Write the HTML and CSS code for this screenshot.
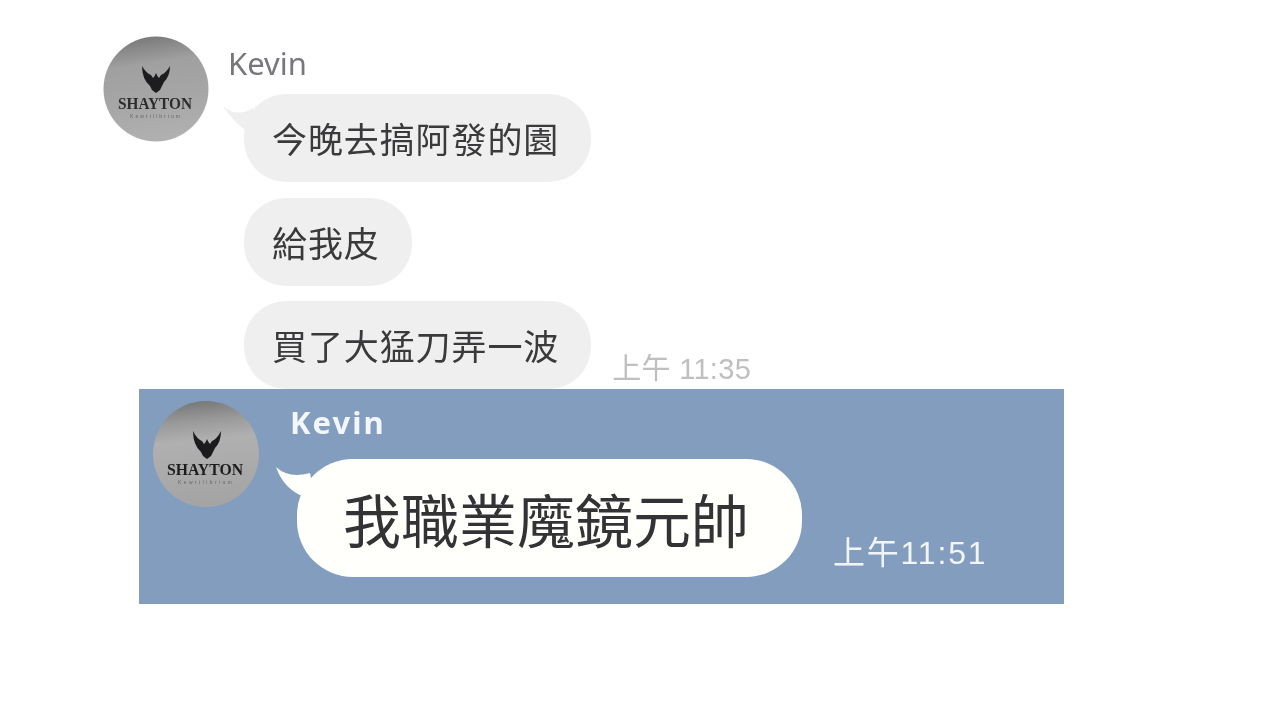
FILE: index.html
```html
<!DOCTYPE html>
<html lang="zh-Hant">
<head>
<meta charset="utf-8">
<title>Kevin</title>
<link rel="stylesheet" href="styles.css">
</head>
<body>
<section class="light">
  <svg class="avatar" viewBox="0 0 106 106" aria-hidden="true">
    <defs>
      <linearGradient id="g1" x1="0.1" y1="0" x2="0.25" y2="1">
        <stop offset="0" stop-color="#737373"/><stop offset=".3" stop-color="#a0a0a0"/><stop offset=".65" stop-color="#a6a6a6"/><stop offset="1" stop-color="#b0b0b0"/>
      </linearGradient>
    </defs>
    <circle cx="53" cy="53" r="52.5" fill="url(#g1)"/>
    <path d="M39 30 Q43 37 48 39 L50 42 Q52 40 53 37 Q54 40 56 42 L58 39 Q63 37 67 30 Q67 40 61 46 L59 50 L57 54 L53 57 L49 54 L47 50 Q39 43 39 30Z" fill="#1d1d1f"/>
    <text class="brand" x="52" y="73" textLength="74" lengthAdjust="spacingAndGlyphs">SHAYTON</text>
    <text class="tiny" x="52" y="82" textLength="50">Kewrilibrium</text>
  </svg>
  <div class="chat">
    <div class="name">Kevin</div>
    <div class="row first">
      <svg class="tail" viewBox="0 0 36 36" aria-hidden="true"><path d="M1 12 Q15 24 31 14 L36 36 L23 36 Q10 26 1 12Z" fill="#efefef"/></svg>
      <div class="bubble">今晚去搞阿發的園</div>
    </div>
    <div class="row"><div class="bubble">給我皮</div></div>
    <div class="row"><div class="bubble">買了大猛刀弄一波</div><span class="time">上午 11:35</span></div>
  </div>
</section>
<section class="blue">
  <svg class="avatar" viewBox="0 0 106 106" aria-hidden="true">
    <defs>
      <linearGradient id="g2" x1="0.1" y1="0" x2="0.2" y2="1">
        <stop offset="0" stop-color="#727272"/><stop offset=".22" stop-color="#9a9a9a"/><stop offset=".4" stop-color="#b0b0b0"/><stop offset="1" stop-color="#a4a4a4"/>
      </linearGradient>
    </defs>
    <circle cx="53" cy="53" r="53" fill="url(#g2)"/>
    <path d="M40 30 Q44 38 49 40 L51 43 Q53 41 54 38 Q55 41 57 43 L59 40 Q64 38 68 30 Q68 41 62 47 L60 51 L58 55 L54 58 L50 55 L48 51 Q40 44 40 30Z" fill="#1b1b1d"/>
    <text class="brand strong" x="52" y="74" textLength="76" lengthAdjust="spacingAndGlyphs">SHAYTON</text>
    <text class="tiny" x="52" y="83" textLength="54">Kewrilibrium</text>
  </svg>
  <div class="chat big">
    <div class="name">Kevin</div>
    <div class="main">
      <svg class="tail" viewBox="0 0 40 40" aria-hidden="true"><path d="M1 8 Q14 20 35 14 L40 40 L25 36 Q8 28 1 8Z" fill="#fffffb"/></svg>
      <div class="bubble">我職業魔鏡元帥</div>
      <span class="time">上午11:51</span>
    </div>
  </div>
</section>
</body>
</html>
```
FILE: styles.css
```css
html, body { margin: 0; padding: 0; }
body {
  width: 1280px;
  height: 720px;
  overflow: hidden;
  background: #fff;
  font-family: "Liberation Sans", "Noto Sans CJK TC", sans-serif;
}
.avatar, .bubble, .name, .time, .tail { filter: blur(0.4px); }
.avatar { display: block; width: 106px; height: 106px; flex: none; }
.brand {
  font-family: "Liberation Serif", serif;
  font-size: 16px;
  font-weight: 700;
  fill: #2c2c2e;
  text-anchor: middle;
}
.brand.strong { fill: #1c1c1e; }
.tiny {
  font-family: "Liberation Sans", sans-serif;
  font-size: 5px;
  fill: #66666a;
  text-anchor: middle;
}
.light {
  display: flex;
  height: 389px;
  box-sizing: border-box;
  padding: 36px 0 0 103px;
}
.light .chat { margin-left: 13px; }
.light .name {
  height: 58px;
  padding-left: 6px;
  font-family: "Noto Sans", sans-serif;
  font-size: 31px;
  line-height: 54px;
  color: #77777c;
}
.light .row {
  position: relative;
  display: flex;
  align-items: flex-end;
  margin-left: 22px;
  margin-bottom: 15px;
}
.light .row.first { margin-bottom: 16px; }
.light .row:last-child { margin-bottom: 0; }
.light .bubble {
  height: 88px;
  padding: 0 32px 0 28px;
  border-radius: 42px;
  background: #efefef;
  color: #3a3a3c;
  font-size: 35px;
  letter-spacing: 0.9px;
  line-height: 94px;
  white-space: nowrap;
}
.light .tail {
  position: absolute;
  left: -22px;
  top: 0;
  width: 36px;
  height: 36px;
}
.light .time {
  margin-left: 21px;
  margin-bottom: 2px;
  color: #bfbfc1;
  font-size: 29px;
  letter-spacing: 0.3px;
  line-height: 36px;
  white-space: nowrap;
}
.blue {
  display: flex;
  width: 925px;
  height: 215px;
  margin-left: 139px;
  box-sizing: border-box;
  padding: 12px 0 0 14px;
  background: #839dbe;
}
.big { margin-left: 31px; }
.big .name {
  height: 58px;
  font-family: "Noto Sans", sans-serif;
  font-size: 31px;
  font-weight: 700;
  letter-spacing: 2px;
  line-height: 42px;
  color: #f4f7fa;
}
.big .main {
  position: relative;
  display: flex;
  align-items: flex-end;
  margin-left: 7px;
}
.big .bubble {
  height: 118px;
  padding: 0 53px 0 46px;
  border-radius: 56px;
  background: #fffffb;
  color: #333335;
  font-size: 58px;
  letter-spacing: 0;
  line-height: 127px;
  white-space: nowrap;
}
.big .tail {
  position: absolute;
  left: -22px;
  top: 0;
  width: 40px;
  height: 40px;
}
.big .time {
  margin-left: 31px;
  margin-bottom: 6px;
  color: #f2f5f8;
  font-size: 32px;
  letter-spacing: 1.8px;
  line-height: 36px;
  white-space: nowrap;
}
```
